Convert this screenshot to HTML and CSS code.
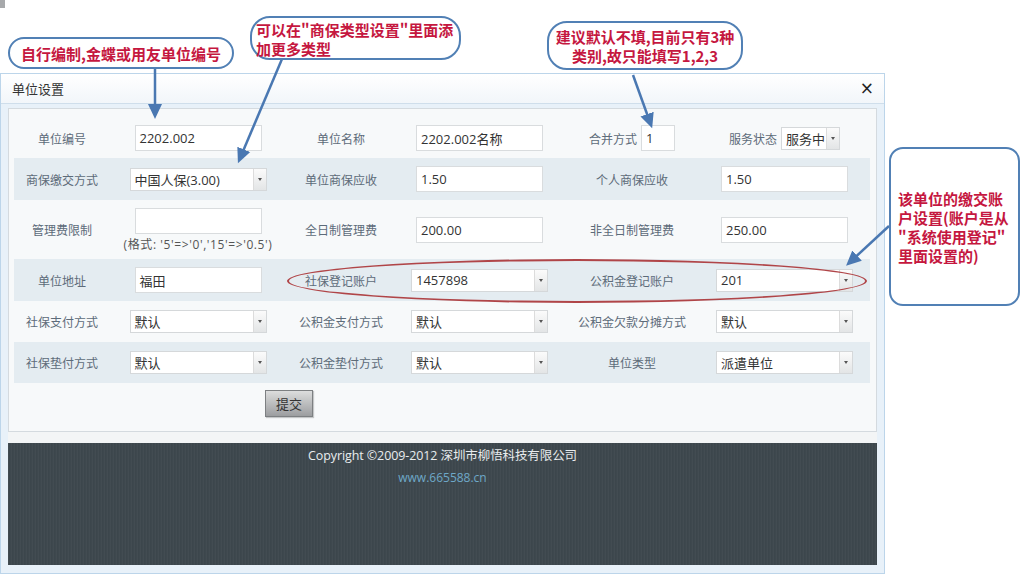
FILE: index.html
```html
<!DOCTYPE html>
<html lang="zh-CN">
<head>
<meta charset="utf-8">
<title>单位设置</title>
<link rel="stylesheet" href="styles.css">
</head>
<body>
<div class="corner-mark"></div>

<div class="dialog">
  <div class="titlebar">
    <span class="title">单位设置</span>
    <span class="close">×</span>
  </div>
  <div class="body">
    <div class="panel-wrap">
      <div class="panel">
        <div class="row r1">
          <div class="lbl">单位编号</div>
          <div class="fld"><div class="txt">2202.002</div></div>
          <div class="lbl">单位名称</div>
          <div class="fld"><div class="txt">2202.002名称</div></div>
          <div class="fld pair"><span class="lbl-inline">合并方式</span><div class="txt tiny">1</div></div>
          <div class="fld pair"><span class="lbl-inline">服务状态</span><div class="sel small"><span class="val">服务中</span><span class="arr"></span></div></div>
        </div>
        <div class="row alt r2">
          <div class="lbl">商保缴交方式</div>
          <div class="fld"><div class="sel"><span class="val">中国人保(3.00)</span><span class="arr"></span></div></div>
          <div class="lbl">单位商保应收</div>
          <div class="fld"><div class="txt">1.50</div></div>
          <div class="lbl">个人商保应收</div>
          <div class="fld"><div class="txt">1.50</div></div>
        </div>
        <div class="row r3">
          <div class="lbl">管理费限制</div>
          <div class="fld stack"><div class="txt"></div><div class="hint">(格式: '5'=&gt;'0','15'=&gt;'0.5')</div></div>
          <div class="lbl">全日制管理费</div>
          <div class="fld"><div class="txt">200.00</div></div>
          <div class="lbl">非全日制管理费</div>
          <div class="fld"><div class="txt">250.00</div></div>
        </div>
        <div class="row alt r4">
          <div class="lbl">单位地址</div>
          <div class="fld"><div class="txt">福田</div></div>
          <div class="lbl">社保登记账户</div>
          <div class="fld"><div class="sel"><span class="val">1457898</span><span class="arr"></span></div></div>
          <div class="lbl">公积金登记账户</div>
          <div class="fld"><div class="sel"><span class="val">201</span><span class="arr"></span></div></div>
        </div>
        <div class="row r5">
          <div class="lbl">社保支付方式</div>
          <div class="fld"><div class="sel"><span class="val">默认</span><span class="arr"></span></div></div>
          <div class="lbl">公积金支付方式</div>
          <div class="fld"><div class="sel"><span class="val">默认</span><span class="arr"></span></div></div>
          <div class="lbl">公积金欠款分摊方式</div>
          <div class="fld"><div class="sel"><span class="val">默认</span><span class="arr"></span></div></div>
        </div>
        <div class="row alt r6">
          <div class="lbl">社保垫付方式</div>
          <div class="fld"><div class="sel"><span class="val">默认</span><span class="arr"></span></div></div>
          <div class="lbl">公积金垫付方式</div>
          <div class="fld"><div class="sel"><span class="val">默认</span><span class="arr"></span></div></div>
          <div class="lbl">单位类型</div>
          <div class="fld"><div class="sel"><span class="val">派遣单位</span><span class="arr"></span></div></div>
        </div>
        <div class="btn-row"><button class="submit">提交</button></div>
      </div>
    </div>
    <div class="footer">
      <div class="copy">Copyright ©2009-2012 深圳市柳悟科技有限公司</div>
      <div class="url">www.665588.cn</div>
    </div>
  </div>
</div>

<div class="ellipse"></div>

<svg class="arrows" width="1024" height="575" viewBox="0 0 1024 575">
  <defs>
    <marker id="head" markerUnits="userSpaceOnUse" markerWidth="16" markerHeight="16" refX="11" refY="8" orient="auto">
      <path d="M0,1 L15,8 L0,15 z" fill="#4a78b2"/>
    </marker>
  </defs>
  <line x1="155" y1="68" x2="155" y2="115" class="ln" marker-end="url(#head)"/>
  <line x1="282" y1="59" x2="239.5" y2="159.5" class="ln" marker-end="url(#head)"/>
  <line x1="633" y1="75" x2="650.8" y2="124.5" class="ln" marker-end="url(#head)"/>
  <line x1="889" y1="226" x2="849" y2="263" class="ln" marker-end="url(#head)"/>
</svg>

<div class="note n1">自行编制,金蝶或用友单位编号</div>
<div class="note n2">可以在"商保类型设置"里面添<br>加更多类型</div>
<div class="note n3">建议默认不填,目前只有3种<br>类别,故只能填写1,2,3</div>
<div class="note n4"><div>该单位的缴交账<br>户设置(账户是从<br>"系统使用登记"<br>里面设置的)</div></div>
</body>
</html>
```

FILE: styles.css
```css
* { box-sizing: border-box; }
html, body { margin: 0; padding: 0; }
body {
  width: 1024px;
  height: 575px;
  overflow: hidden;
  background: #ffffff;
  font-family: "Noto Sans CJK SC", "Open Sans", sans-serif;
  position: relative;
}

.corner-mark {
  position: absolute;
  left: 0; top: 0;
  width: 5px; height: 8px;
  background: #a7a9ab;
}

.dialog {
  margin-top: 73px;
  width: 885px;
  height: 501px;
  border: 1px solid #bcd5ea;
  background: #e8f1f9;
  display: flex;
  flex-direction: column;
}

.titlebar {
  height: 30px;
  flex: none;
  display: flex;
  align-items: center;
  justify-content: space-between;
  padding: 0 10px 0 11px;
  background: linear-gradient(#ffffff, #f2f6fa);
  border-bottom: 1px solid #cfdeeb;
}
.title { font-size: 13px; color: #333; }
.close { font-size: 17px; color: #222; line-height: 1; font-family: "DejaVu Sans", sans-serif; }

.body {
  padding: 4px 7px 7px 7px;
  display: flex;
  flex-direction: column;
}

.panel-wrap {
  background: #f3f5f6;
  padding-bottom: 11px;
}

.panel {
  border: 1px solid #d4dadf;
  background: #f7f9fa;
  height: 324px;
  padding: 9px 6px 0 5px;
}

.row {
  display: grid;
  grid-template-columns: 96px 176px 110px 167px 138px 167px;
  align-items: center;
  height: 41px;
}
.row.r1 { height: 40px; }
.row.r2 { height: 42px; }
.row.r3 { height: 59px; }
.row.r4 { height: 42px; }
.row.alt { background: #e4ecf1; }

.lbl, .lbl-inline {
  font-size: 12px;
  color: #5d6b79;
  text-align: center;
  white-space: nowrap;
}
.fld { display: flex; justify-content: center; align-items: center; }
.fld.pair { gap: 5px; }
.fld.pair .lbl-inline { margin-right: -1px; }
.fld.stack { flex-direction: column; gap: 1px; padding-top: 1px; }

.txt {
  width: 127px;
  height: 26px;
  border: 1px solid #d9dcde;
  background: #ffffff;
  font-family: "Open Sans", "Noto Sans CJK SC", sans-serif;
  font-size: 13px;
  color: #333;
  padding: 0 4px;
  display: flex;
  align-items: center;
  white-space: nowrap;
}
.txt.tiny { width: 34px; }

.hint {
  font-family: "Open Sans", "Noto Sans CJK SC", sans-serif;
  font-size: 12px;
  color: #555;
  white-space: nowrap;
  letter-spacing: 0.6px;
}

.sel {
  width: 137px;
  height: 23px;
  border: 1px solid #d5d8da;
  background: #ffffff;
  display: flex;
  align-items: stretch;
  font-family: "Open Sans", "Noto Sans CJK SC", sans-serif;
  font-size: 13px;
  color: #333;
}
.sel.small { width: 59px; }
.sel .val {
  flex: 1;
  display: flex;
  align-items: center;
  padding-left: 4px;
  white-space: nowrap;
  overflow: hidden;
}
.sel .arr {
  width: 13px;
  flex: none;
  border-left: 1px solid #dcdcdc;
  background: linear-gradient(#fbfbfb, #e3e5e6);
  display: flex;
  align-items: center;
  justify-content: center;
}
.sel .arr::before {
  content: "";
  width: 0; height: 0;
  border-left: 2px solid transparent;
  border-right: 2px solid transparent;
  border-top: 3px solid #555;
}

.btn-row { padding: 7px 0 0 251px; }
.submit {
  width: 48px;
  height: 27px;
  border: 1px solid #7d8082;
  background: linear-gradient(#dcdddd, #9c9ea0);
  font-family: "Noto Sans CJK SC", sans-serif;
  font-size: 13px;
  color: #333;
  padding: 0;
  box-shadow: 1px 1px 1px rgba(0,0,0,0.2);
}

.footer {
  height: 122px;
  background-color: #3e484e;
  background-image: repeating-linear-gradient(90deg, rgba(255,255,255,0.025) 0 1px, rgba(0,0,0,0.03) 1px 2px, transparent 2px 3px);
  text-align: center;
  padding-top: 4px;
}
.copy {
  font-family: "Open Sans", "Noto Sans CJK SC", sans-serif;
  font-size: 12.5px;
  color: #e9ecee;
  letter-spacing: -0.1px;
  line-height: 18px;
}
.url {
  font-family: "Open Sans", sans-serif;
  font-size: 12px;
  color: #6ea8c8;
  line-height: 18px;
  margin-top: 4px;
}

.ellipse {
  position: absolute;
  left: 287px;
  top: 259px;
  width: 580px;
  height: 44px;
  border: 2.5px solid #b04548;
  border-radius: 50%;
}

.arrows {
  position: absolute;
  left: 0; top: 0;
  pointer-events: none;
}
.ln { stroke: #4a78b2; stroke-width: 2.5; }

.note {
  position: absolute;
  background: #ffffff;
  border: 2.5px solid #5180b5;
  color: #c5173f;
  font-family: "Noto Sans CJK SC", sans-serif;
  font-weight: bold;
  font-size: 15px;
  white-space: nowrap;
}
.n1 {
  left: 8px; top: 37px; width: 226px; height: 32px;
  border-radius: 16px;
  display: flex; align-items: center; justify-content: center;
  line-height: 1;
}
.n2 {
  left: 250px; top: 16px; width: 211px; height: 44px;
  border-radius: 20px;
  padding: 2px 0 0 4px;
  line-height: 19px;
}
.n3 {
  left: 547px; top: 21px; width: 196px; height: 49px;
  border-radius: 20px;
  text-align: center;
  padding-top: 4px;
  line-height: 19px;
}
.n4 {
  left: 889px; top: 147px; width: 131px; height: 159px;
  border-radius: 14px;
  display: flex; align-items: center;
  padding-left: 7px;
  line-height: 19px;
  font-size: 15px;
}
```
